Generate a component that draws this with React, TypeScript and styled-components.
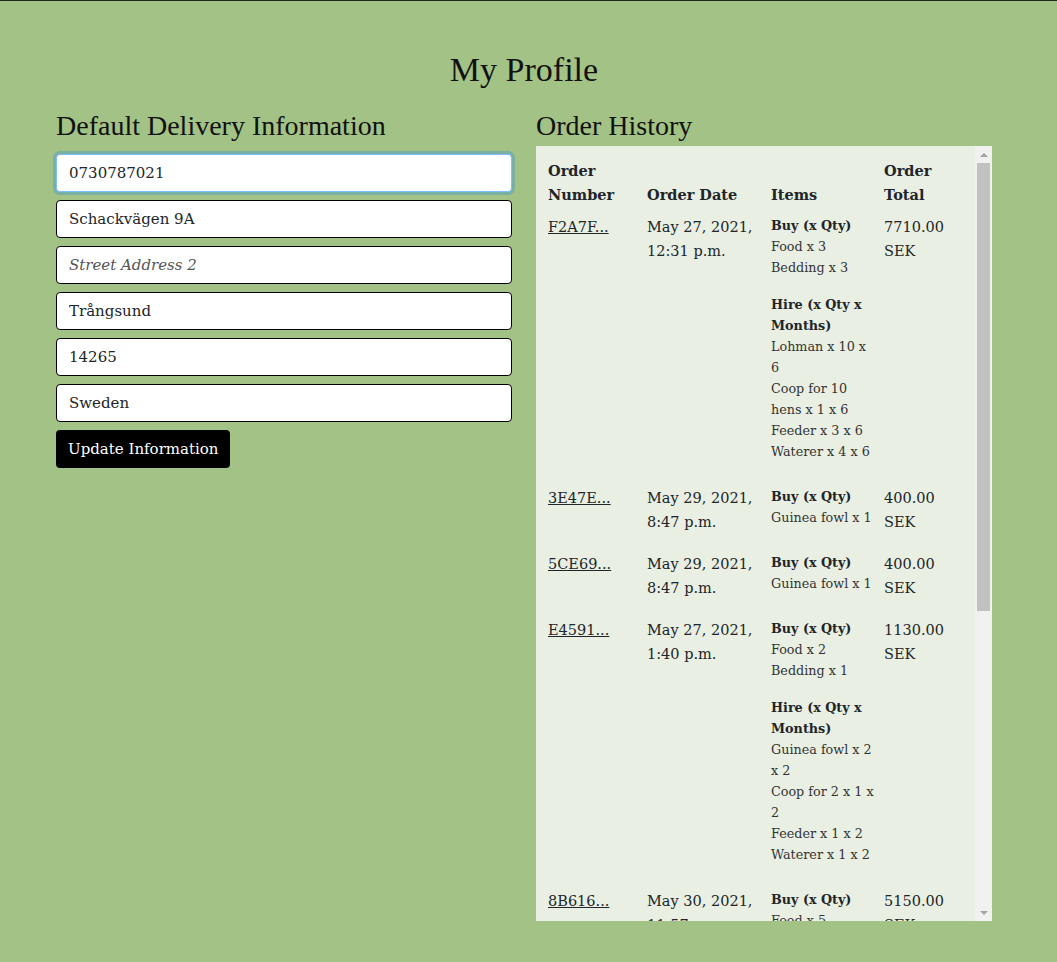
import React from 'react';
import styled, { createGlobalStyle } from 'styled-components';

const GlobalStyle = createGlobalStyle`
  html, body {
    margin: 0;
    padding: 0;
    background-color: #a3c285;
  }
  body {
    font-family: "DejaVu Serif", serif;
    color: #212529;
  }
  * {
    box-sizing: border-box;
  }
`;

const Page = styled.div`
  min-height: 962px;
  border-top: 1px solid #1f2a1a;
  padding: 48px 56px 0;
`;

const Title = styled.h1`
  margin: 0 0 19px;
  width: 936px;
  text-align: center;
  font-family: "Liberation Serif", serif;
  font-weight: 400;
  font-size: 34px;
  line-height: 41px;
  color: #111;
`;

const Columns = styled.div`
  display: grid;
  grid-template-columns: 456px 456px;
  column-gap: 24px;
  align-items: start;
`;

const Column = styled.section`
  display: flex;
  flex-direction: column;
`;

const Heading = styled.h2<{ $gap: number }>`
  margin: 0 0 ${(p) => p.$gap}px;
  font-family: "Liberation Serif", serif;
  font-weight: 400;
  font-size: 28px;
  line-height: 34px;
  color: #111;
`;

const Form = styled.form`
  display: flex;
  flex-direction: column;
  align-items: flex-start;
  gap: 8px;
`;

const Field = styled.input<{ $focused?: boolean }>`
  width: 456px;
  height: 38px;
  padding: 0 12px;
  border: 1px solid ${(p) => (p.$focused ? '#80bdff' : '#000')};
  border-radius: 4px;
  background: #fff;
  font-family: "DejaVu Serif", serif;
  font-size: 15px;
  color: #212529;
  outline: none;
  box-shadow: ${(p) => (p.$focused ? '0 0 0 3px rgba(0, 123, 255, 0.25)' : 'none')};

  &::placeholder {
    font-style: italic;
    color: #555;
  }
`;

const Button = styled.button`
  height: 38px;
  padding: 0 12px;
  border: none;
  border-radius: 4px;
  background: #000;
  color: #fff;
  font-family: "DejaVu Serif", serif;
  font-size: 15px;
  cursor: pointer;
`;

const Panel = styled.div`
  display: flex;
  height: 775px;
  background: #e9efe3;
`;

const ScrollArea = styled.div`
  flex: 1;
  overflow: hidden;
  padding: 9px 8px 8px;
`;

const ScrollTrack = styled.div`
  display: flex;
  flex-direction: column;
  width: 17px;
  background: #f1f1f1;
`;

const ArrowButton = styled.div<{ $down?: boolean }>`
  height: 17px;
  display: flex;
  align-items: center;
  justify-content: center;

  &::before {
    content: '';
    width: 0;
    height: 0;
    border-left: 4px solid transparent;
    border-right: 4px solid transparent;
    ${(p) => (p.$down ? 'border-top' : 'border-bottom')}: 4px solid #a3a3a3;
  }
`;

const Thumb = styled.div`
  height: 448px;
  margin: 0 2px;
  background: #c1c1c1;
`;

const TrackSpace = styled.div`
  flex: 1;
`;

const Table = styled.table`
  width: 423px;
  table-layout: fixed;
  border-collapse: collapse;
`;

const Th = styled.th<{ $w: number }>`
  width: ${(p) => p.$w}px;
  padding: 4px;
  text-align: left;
  vertical-align: bottom;
  font-weight: 700;
  font-size: 14.5px;
  line-height: 24px;
  color: #212529;
`;

const Td = styled.td`
  padding: 4px;
  vertical-align: top;
  font-size: 14.5px;
  line-height: 24px;
  color: #212529;
`;

const OrderLink = styled.a`
  color: #212529;
  text-decoration: underline;
`;

const ItemGroup = styled.div`
  margin-bottom: 16px;
  font-size: 12.75px;
  line-height: 21px;
  color: #333;
`;

const GroupTitle = styled.div`
  font-weight: 700;
  color: #212529;
`;

type Order = {
  number: string;
  date: string;
  buy: string[];
  hire?: string[];
  total: string;
};

const orders: Order[] = [
  {
    number: 'F2A7F...',
    date: 'May 27, 2021, 12:31 p.m.',
    buy: ['Food x 3', 'Bedding x 3'],
    hire: ['Lohman x 10 x 6', 'Coop for 10 hens x 1 x 6', 'Feeder x 3 x 6', 'Waterer x 4 x 6'],
    total: '7710.00 SEK',
  },
  {
    number: '3E47E...',
    date: 'May 29, 2021, 8:47 p.m.',
    buy: ['Guinea fowl x 1'],
    total: '400.00 SEK',
  },
  {
    number: '5CE69...',
    date: 'May 29, 2021, 8:47 p.m.',
    buy: ['Guinea fowl x 1'],
    total: '400.00 SEK',
  },
  {
    number: 'E4591...',
    date: 'May 27, 2021, 1:40 p.m.',
    buy: ['Food x 2', 'Bedding x 1'],
    hire: ['Guinea fowl x 2 x 2', 'Coop for 2 x 1 x 2', 'Feeder x 1 x 2', 'Waterer x 1 x 2'],
    total: '1130.00 SEK',
  },
  {
    number: '8B616...',
    date: 'May 30, 2021, 11:57 a.m.',
    buy: ['Food x 5', 'Bedding x 2'],
    hire: ['Lohman x 6 x 12', 'Coop for 6 hens x 1 x 12', 'Feeder x 2 x 12', 'Waterer x 2 x 12'],
    total: '5150.00 SEK',
  },
  {
    number: '1D9C2...',
    date: 'May 31, 2021, 9:12 a.m.',
    buy: ['Food x 1'],
    total: '150.00 SEK',
  },
];

const OrderRow = ({ order }: { order: Order }) => (
  <tr>
    <Td>
      <OrderLink href="#">{order.number}</OrderLink>
    </Td>
    <Td>{order.date}</Td>
    <Td>
      <ItemGroup>
        <GroupTitle>Buy (x Qty)</GroupTitle>
        {order.buy.map((line) => (
          <div key={line}>{line}</div>
        ))}
      </ItemGroup>
      {order.hire && (
        <ItemGroup>
          <GroupTitle>Hire (x Qty x Months)</GroupTitle>
          {order.hire.map((line) => (
            <div key={line}>{line}</div>
          ))}
        </ItemGroup>
      )}
    </Td>
    <Td>{order.total}</Td>
  </tr>
);

const App = () => (
  <>
    <GlobalStyle />
    <Page>
      <Title>My Profile</Title>
      <Columns>
        <Column>
          <Heading $gap={11}>Default Delivery Information</Heading>
          <Form onSubmit={(e) => e.preventDefault()}>
            <Field $focused defaultValue="0730787021" />
            <Field defaultValue="Schackvägen 9A" />
            <Field placeholder="Street Address 2" />
            <Field defaultValue="Trångsund" />
            <Field defaultValue="14265" />
            <Field defaultValue="Sweden" />
            <Button type="submit">Update Information</Button>
          </Form>
        </Column>
        <Column>
          <Heading $gap={3}>Order History</Heading>
          <Panel>
            <ScrollArea>
              <Table>
                <thead>
                  <tr>
                    <Th $w={99}>Order Number</Th>
                    <Th $w={124}>Order Date</Th>
                    <Th $w={113}>Items</Th>
                    <Th $w={87}>Order Total</Th>
                  </tr>
                </thead>
                <tbody>
                  {orders.map((o) => (
                    <OrderRow key={o.number} order={o} />
                  ))}
                </tbody>
              </Table>
            </ScrollArea>
            <ScrollTrack>
              <ArrowButton />
              <Thumb />
              <TrackSpace />
              <ArrowButton $down />
            </ScrollTrack>
          </Panel>
        </Column>
      </Columns>
    </Page>
  </>
);

export default App;
